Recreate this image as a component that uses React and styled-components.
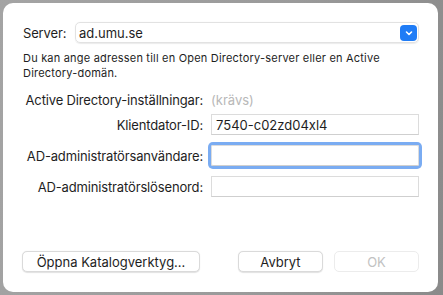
import styled, { createGlobalStyle } from "styled-components";

const Global = createGlobalStyle`
  html, body { margin: 0; padding: 0; }
  body {
    width: 443px;
    height: 295px;
    overflow: hidden;
    background: linear-gradient(100deg, #a4a4a4 0%, #9a9a9a 60%, #8a8a8a 100%);
    font-family: "Inter", "Liberation Sans", sans-serif;
    color: #1e1e1e;
  }
`

// window frame
const Backdrop = styled.div`
  padding: 3px 5px 3px 3px;
`
const Sheet = styled.div`
  width: 435px;
  height: 289px;
  box-sizing: border-box;
  background: #fff;
  border-radius: 10px;
  padding: 19px 19px 20px 19px;
  display: flex;
  flex-direction: column;
`

// server row
const ServerRow = styled.div`
  display: grid;
  grid-template-columns: 53px 1fr;
  align-items: center;
  height: 21px;
`
const Label = styled.span`
  font-size: 13px;
  letter-spacing: -0.15px;
  white-space: nowrap;
  text-align: ${p => (p.$right ? "right" : "left")};
  padding-left: ${p => (p.$right ? 0 : 1)}px;
`
const Combo = styled.div`
  height: 21px;
  box-sizing: border-box;
  display: flex;
  align-items: center;
  justify-content: space-between;
  border: 1px solid #e2e2e2;
  border-radius: 5px;
  box-shadow: 0 0.5px 1px rgba(0, 0, 0, 0.08);
  padding: 0 1px 0 3px;
  font-size: 13px;
`
const DropBtn = styled.div`
  width: 17px;
  height: 16px;
  border-radius: 4px;
  background: #1f7cf6;
  display: flex;
  align-items: center;
  justify-content: center;
`
const Hint = styled.p`
  margin: 8px 0 0 1px;
  font-size: 11px;
  letter-spacing: 0.2px;
  line-height: 15px;
  max-width: 370px;
`

// settings
const Heading = styled.div`
  margin-top: 8px;
  display: grid;
  grid-template-columns: 181px 1fr;
  column-gap: 8px;
  align-items: center;
  height: 21px;
`
const Required = styled.span`
  font-size: 13px;
  color: #b8b8b8;
`
const Form = styled.div`
  margin-top: 4px;
  display: grid;
  grid-template-columns: 181px 208px;
  column-gap: 8px;
  row-gap: 10px;
  align-items: center;
`
const Field = styled.div`
  height: 21px;
  box-sizing: border-box;
  border: 1px solid #dcdcdc;
  border-bottom-color: #cfcfcf;
  border-radius: ${p => (p.$focused ? 2 : 0)}px;
  box-shadow: ${p => (p.$focused ? "0 0 0 3px rgba(0, 95, 230, 0.52)" : "none")};
  padding: 0 4px;
  display: flex;
  align-items: center;
  font-size: 13px;
`

// footer
const Footer = styled.div`
  margin-top: auto;
  display: flex;
  align-items: center;
  gap: 11px;
`
const Spacer = styled.div`
  flex: 1;
`
const Button = styled.div`
  width: ${p => p.$w}px;
  height: 21px;
  box-sizing: border-box;
  border-radius: 5px;
  border: 1px solid ${p => (p.$disabled ? "#ececec" : "#dadada")};
  box-shadow: ${p => (p.$disabled ? "none" : "0 0.5px 1px rgba(0,0,0,0.12)")};
  background: #fff;
  color: ${p => (p.$disabled ? "#c2c2c2" : "#1e1e1e")};
  font-size: 13px;
  display: flex;
  align-items: center;
  justify-content: center;
`

export default function App() {
  return (
    <>
      <Global />
      <Backdrop>
        <Sheet>
          <ServerRow>
            <Label>Server:</Label>
            <Combo>
              <span>ad.umu.se</span>
              <DropBtn>
                <svg width="10" height="10" viewBox="0 0 10 10">
                  <path d="M2.5 4 5 6.5 7.5 4" fill="none" stroke="#fff" strokeWidth="1.6" strokeLinecap="round" strokeLinejoin="round" />
                </svg>
              </DropBtn>
            </Combo>
          </ServerRow>
          <Hint>Du kan ange adressen till en Open Directory-server eller en Active Directory-domän.</Hint>

          <Heading>
            <Label $right>Active Directory-inställningar:</Label>
            <Required>(krävs)</Required>
          </Heading>
          <Form>
            <Label $right>Klientdator-ID:</Label>
            <Field>7540-c02zd04xl4</Field>
            <Label $right>AD-administratörsanvändare:</Label>
            <Field $focused />
            <Label $right>AD-administratörslösenord:</Label>
            <Field />
          </Form>

          <Footer>
            <Button $w={178}>Öppna Katalogverktyg...</Button>
            <Spacer />
            <Button $w={85}>Avbryt</Button>
            <Button $w={85} $disabled>OK</Button>
          </Footer>
        </Sheet>
      </Backdrop>
    </>
  )
}
